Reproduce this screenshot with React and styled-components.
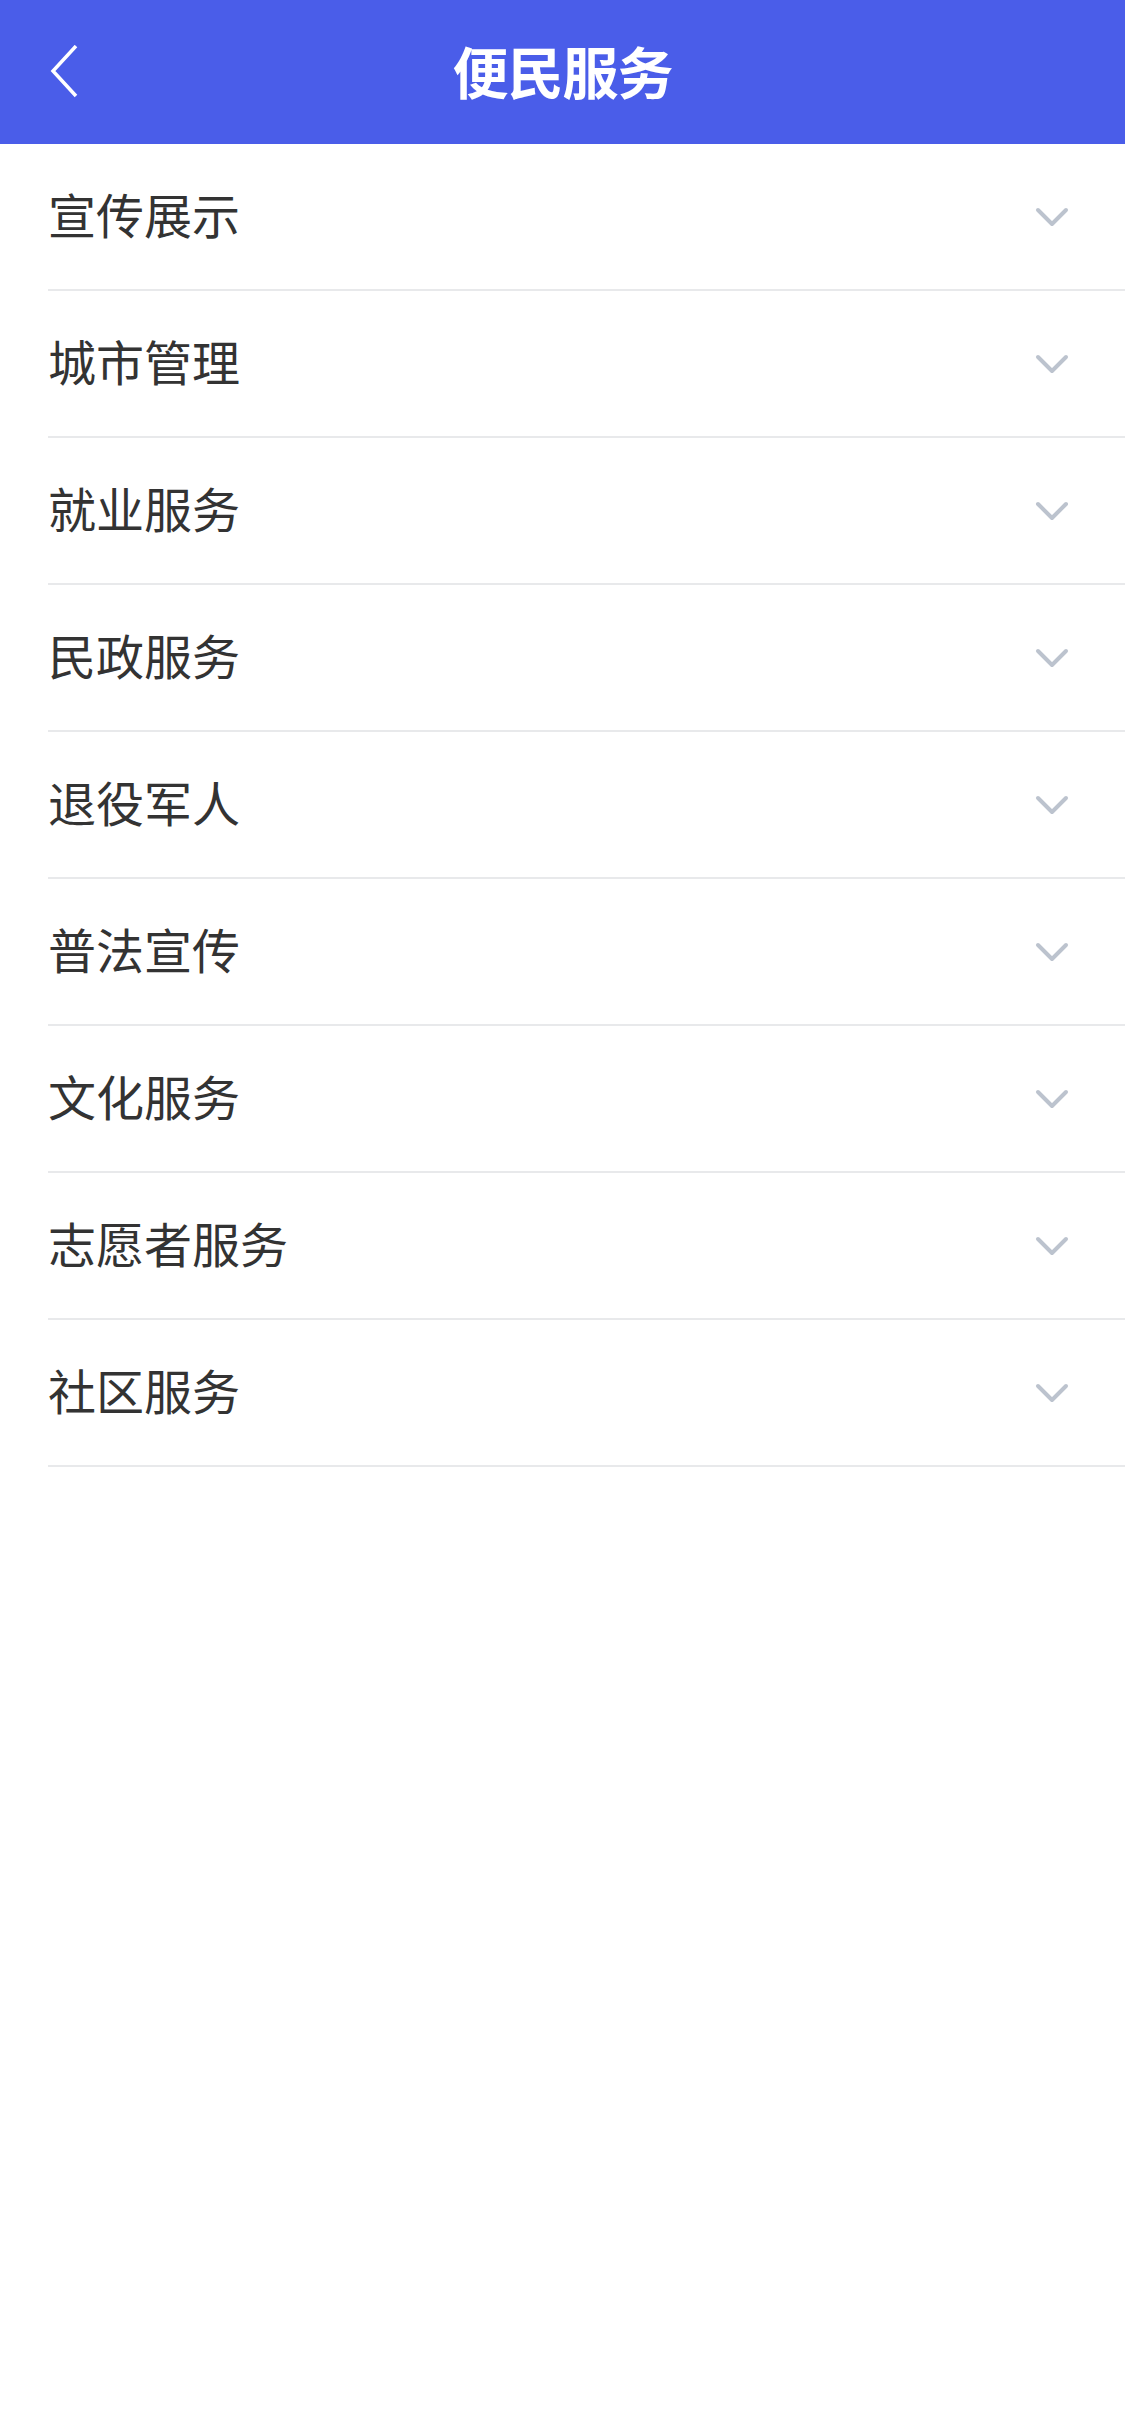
import React from 'react'
import styled, { createGlobalStyle } from 'styled-components'

const GlobalStyle = createGlobalStyle`
  html, body {
    margin: 0;
    padding: 0;
    background: #fff;
  }
  body {
    font-family: "Noto Sans CJK SC", "Noto Sans", sans-serif;
  }
`

const Page = styled.div`
  width: 1125px;
  min-height: 2436px;
  background: #fff;
`

const Header = styled.header`
  position: relative;
  height: 144px;
  background: #4a5de9;
  display: flex;
  align-items: center;
  justify-content: center;
`

const BackButton = styled.button`
  position: absolute;
  left: 40px;
  top: 36px;
  width: 48px;
  height: 72px;
  padding: 0;
  border: 0;
  background: transparent;
  display: flex;
  align-items: center;
  justify-content: center;
`

const Title = styled.h1`
  margin: 0 0 4px;
  color: #fff;
  font-size: 56px;
  font-weight: 700;
  line-height: 1;
  letter-spacing: -1px;
`

const List = styled.ul`
  list-style: none;
  margin: 0;
  padding: 0 0 0 48px;
`

const Row = styled.li`
  height: 145px;
  border-bottom: 2px solid #e8e9eb;
  display: flex;
  align-items: center;
  justify-content: space-between;
  padding-right: 56px;
`

const Label = styled.span`
  font-size: 48px;
  color: #333;
  line-height: 1;
  margin-bottom: 8px;
`

const Chevron = () => (
  <svg width="34" height="20" viewBox="0 0 34 20">
    <polyline
      points="3,3 17,17 31,3"
      fill="none"
      stroke="#bcc3ce"
      strokeWidth="4"
      strokeLinecap="round"
      strokeLinejoin="round"
    />
  </svg>
)

const BackIcon = () => (
  <svg width="30" height="54" viewBox="0 0 30 54">
    <polyline
      points="27,1 4,26 27,51"
      fill="none"
      stroke="#fff"
      strokeWidth="3.5"
    />
  </svg>
)

const items = [
  '宣传展示',
  '城市管理',
  '就业服务',
  '民政服务',
  '退役军人',
  '普法宣传',
  '文化服务',
  '志愿者服务',
  '社区服务',
]

const App = () => (
  <Page>
    <GlobalStyle />
    <Header>
      <BackButton aria-label="返回">
        <BackIcon />
      </BackButton>
      <Title>便民服务</Title>
    </Header>
    <List>
      {items.map((item) => (
        <Row key={item}>
          <Label>{item}</Label>
          <Chevron />
        </Row>
      ))}
    </List>
  </Page>
)

export default App
